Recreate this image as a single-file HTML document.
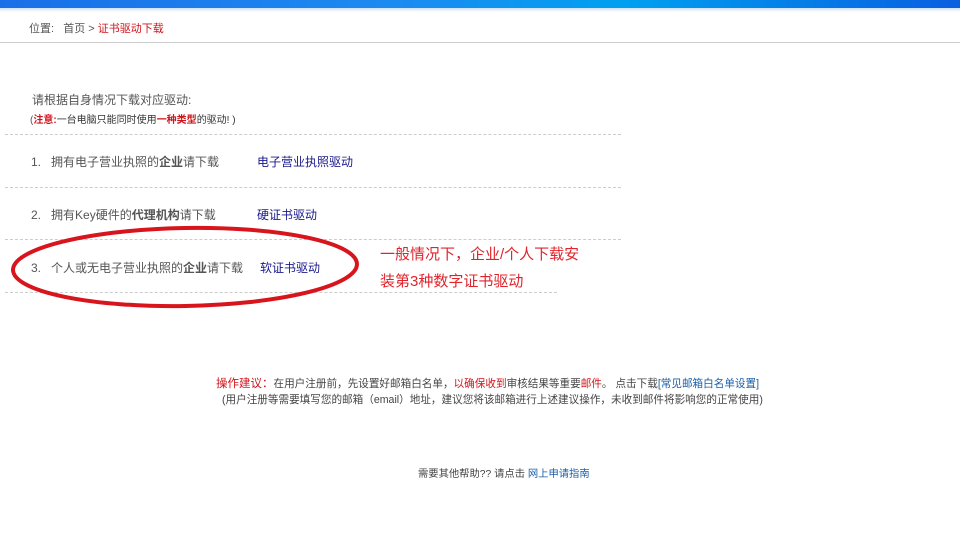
<!DOCTYPE html>
<html><head><meta charset="utf-8"><style>
body{margin:0;width:960px;height:545px;background:#fff;font-family:"Liberation Sans","Noto Sans CJK SC",sans-serif;position:relative;overflow:hidden;color:#555}
.a{position:absolute;white-space:nowrap}
.top{position:absolute;left:0;top:0;width:960px;height:8px;background:linear-gradient(90deg,#1a6fe8 0%,#1d8af0 40%,#00a0f0 65%,#0a5fe0 100%)}
.top2{position:absolute;left:0;top:8px;width:960px;height:4px;background:linear-gradient(#cfe0f7,#fff)}
.hr{position:absolute;left:0;top:42px;width:960px;height:1px;background:#ccc}
.d{position:absolute;height:0;border-top:1px dashed #ccc}
.r{color:#d0141c}
.b{color:#1a1a8c}
.l{color:#1a5fa8}
</style></head><body>
<div class="top"></div><div class="top2"></div>
<div class="a" style="left:29px;top:20px;font-size:11px">位置:&nbsp;&nbsp; 首页 &gt; <span class="r">证书驱动下载</span></div>
<div class="hr"></div>
<div class="a" style="left:32px;top:91px;font-size:12px">请根据自身情况下载对应驱动:</div>
<div class="a" style="left:30px;top:111px;font-size:10px">(<span class="r" style="font-weight:bold">注意:</span><span style="color:#333">一台电脑只能同时使用</span><span class="r" style="font-weight:bold">一种类型</span><span style="color:#333">的驱动! )</span></div>
<div class="d" style="left:5px;top:134px;width:616px"></div>
<div class="a" style="left:31px;top:153px;font-size:12px">1.&nbsp;&nbsp; 拥有电子营业执照的<b>企业</b>请下载</div>
<div class="a b" style="left:257px;top:153px;font-size:12px">电子营业执照驱动</div>
<div class="d" style="left:5px;top:187px;width:616px"></div>
<div class="a" style="left:31px;top:206px;font-size:12px">2.&nbsp;&nbsp; 拥有Key硬件的<b>代理机构</b>请下载</div>
<div class="a b" style="left:257px;top:206px;font-size:12px">硬证书驱动</div>
<div class="d" style="left:5px;top:239px;width:616px"></div>
<div class="a" style="left:31px;top:259px;font-size:12px">3.&nbsp;&nbsp; 个人或无电子营业执照的<b>企业</b>请下载</div>
<div class="a b" style="left:260px;top:259px;font-size:12px">软证书驱动</div>
<div class="d" style="left:5px;top:292px;width:552px"></div>
<svg class="a" style="left:0;top:0" width="960" height="545"><ellipse cx="185" cy="267" rx="172" ry="39" fill="none" stroke="#d8141c" stroke-width="4" transform="rotate(-1 185 267)"/></svg>
<div class="a r" style="left:380px;top:241px;font-size:15px;line-height:27px;color:#e0242c">一般情况下，企业/个人下载安<br>装第3种数字证书驱动</div>
<div class="a" style="left:216px;top:375px;font-size:10.6px;color:#444"><span class="r" style="font-size:11.5px">操作建议：</span>在用户注册前，先设置好邮箱白名单，<span class="r">以确保收到</span>审核结果等重要<span class="r">邮件</span>。 点击下载<span class="l">[常见邮箱白名单设置]</span></div>
<div class="a" style="left:222px;top:392px;font-size:10.6px;color:#444">(用户注册等需要填写您的邮箱（email）地址，建议您将该邮箱进行上述建议操作，未收到邮件将影响您的正常使用)</div>
<div class="a" style="left:418px;top:465px;font-size:10.3px;color:#444">需要其他帮助?? 请点击 <span class="l">网上申请指南</span></div>
</body></html>
